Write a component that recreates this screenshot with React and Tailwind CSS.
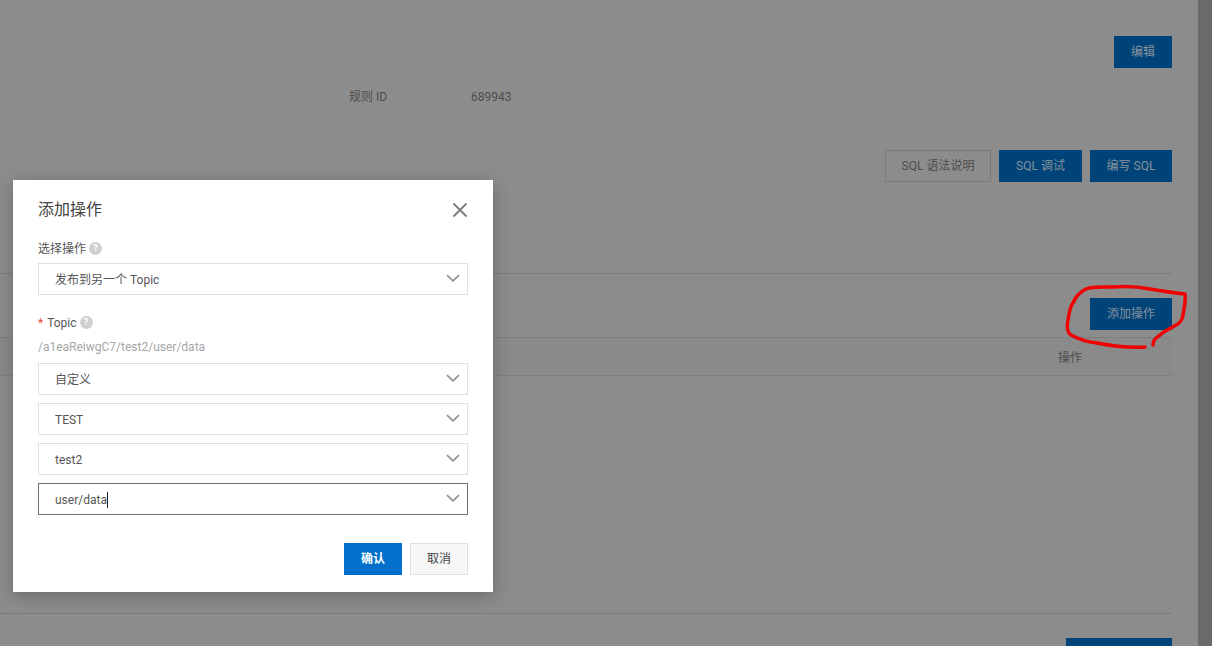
import React from "react";

const font = { fontFamily: 'Roboto,"Noto Sans CJK SC",sans-serif' };

function Chevron() {
  return (
    <svg width="14" height="8" viewBox="0 0 14 8" fill="none" className="shrink-0">
      <path d="M1 1.2 L7 6.8 L13 1.2" stroke="#8f8f8f" strokeWidth="1.6" />
    </svg>
  );
}

function Select({ children, focused }) {
  return (
    <div className={`h-8 w-[430px] flex items-center justify-between pl-4 pr-[7px] border text-xs text-[#555] bg-white ${focused ? "border-[#707070]" : "border-[#e0e0e0]"}`}>
      <span className="flex items-center leading-none pt-[2px]">{children}</span>
      <span className="pb-[3px] flex items-center"><Chevron /></span>
    </div>
  );
}

function Help() {
  return (
    <span className="w-[13px] h-[13px] rounded-full bg-[#cfcfcf] text-white text-[9px] font-bold leading-[13px] text-center inline-block">?</span>
  );
}

function DimBtn({ w, children }) {
  return (
    <div className={`h-8 shrink-0 ${w} bg-[#004379] text-[#87929b] text-xs flex items-center justify-center`}>{children}</div>
  );
}

export default function App() {
  return (
    <div className="relative w-[1212px] h-[646px] overflow-hidden bg-[#8c8c8c] flex text-xs" style={font}>
      {/* dimmed page */}
      <div className="w-[1172px] shrink-0 flex flex-col text-[#4d4d4d]">
        <div className="h-[36px] shrink-0" />
        <div className="flex justify-end shrink-0"><DimBtn w="w-[58px]">编辑</DimBtn></div>
        <div className="h-[20px] shrink-0 mt-[19px] pl-[349px] flex items-center">
          <span className="w-[122px]">规则 ID</span>
          <span>689943</span>
        </div>
        <div className="flex justify-end gap-2 mt-[43px] shrink-0">
          <div className="h-8 w-[106px] border border-[#7a7a7a] flex items-center justify-center">SQL 语法说明</div>
          <DimBtn w="w-[83px]">SQL 调试</DimBtn>
          <DimBtn w="w-[82px]">编写 SQL</DimBtn>
        </div>
        <div className="h-px shrink-0 bg-[#7b7b7b] mt-[91px]" />
        <div className="flex justify-end mt-6 shrink-0"><DimBtn w="w-[82px]">添加操作</DimBtn></div>
        <div className="mt-[7px] h-[39px] shrink-0 border-y border-[#7f7f7f] bg-[#8a8a8a] flex items-center justify-end pr-[90px] pt-[2px] text-[#4d4d4d]">操作</div>
        <div className="h-px shrink-0 bg-[#7b7b7b] mt-[237px]" />
        <div className="flex justify-end mt-6 shrink-0"><DimBtn w="w-[106px]">&nbsp;</DimBtn></div>
      </div>
      <div className="flex-1" />
      <div className="w-[14px] shrink-0 bg-[#6a6a6a]" />

      {/* red annotation */}
      <svg className="absolute left-0 top-0 pointer-events-none" width="1212" height="646" fill="none">
        <path
          d="M1145 347 C1130 348 1112 346 1097 343 C1088 342 1078 339 1071 335 C1066 332 1067 325 1068 320 C1069 313 1070 306 1073 303 C1075 298 1080 292 1086 289 C1092 286 1105 287 1113 287 C1125 286 1140 287 1150 289 C1162 291 1175 293 1185 294 C1186 302 1184 308 1183 315 C1182 321 1180 323 1176 325 C1170 329 1164 331 1160 335 C1156 338 1153 340 1153 345"
          stroke="#f00000"
          strokeWidth="3.5"
          strokeLinecap="round"
          strokeLinejoin="round"
        />
      </svg>

      {/* modal */}
      <div className="absolute left-[13px] top-[180px] w-[480px] h-[412px] bg-white shadow-[0_4px_16px_rgba(0,0,0,0.25)] px-[25px] pt-[20px] flex flex-col">
        <div className="flex items-center justify-between h-5">
          <span className="text-base leading-5 text-[#444]">添加操作</span>
          <svg width="16" height="16" viewBox="0 0 16 16" fill="none">
            <path d="M1.5 1.5 L14.5 14.5 M14.5 1.5 L1.5 14.5" stroke="#808080" strokeWidth="2" />
          </svg>
        </div>
        <div className="mt-[19px] h-[18px] flex items-center gap-[3px] text-[#555] pt-px">
          <span>选择操作</span><Help />
        </div>
        <div className="mt-[6px]"><Select>发布到另一个 Topic</Select></div>
        <div className="mt-[18px] h-[18px] flex items-center gap-[3px] text-[#555] pt-px">
          <span><span className="text-[#e64b3c] mr-[4px]">*</span>Topic</span><Help />
        </div>
        <div className="mt-[6px] h-[18px] flex items-center text-[#a6a6a6] pt-px">/a1eaReiwgC7/test2/user/data</div>
        <div className="mt-[8px] flex flex-col gap-2">
          <Select>自定义</Select>
          <Select>TEST</Select>
          <Select>test2</Select>
          <Select focused>user/data<span className="inline-block w-px h-4 bg-[#222]" /></Select>
        </div>
        <div className="mt-[28px] flex justify-end gap-2">
          <div className="h-8 w-[58px] bg-[#0070cc] text-white font-bold flex items-center justify-center">确认</div>
          <div className="h-8 w-[58px] bg-[#f7f7f7] border border-[#e0e0e0] text-[#444] flex items-center justify-center">取消</div>
        </div>
      </div>
    </div>
  );
}
